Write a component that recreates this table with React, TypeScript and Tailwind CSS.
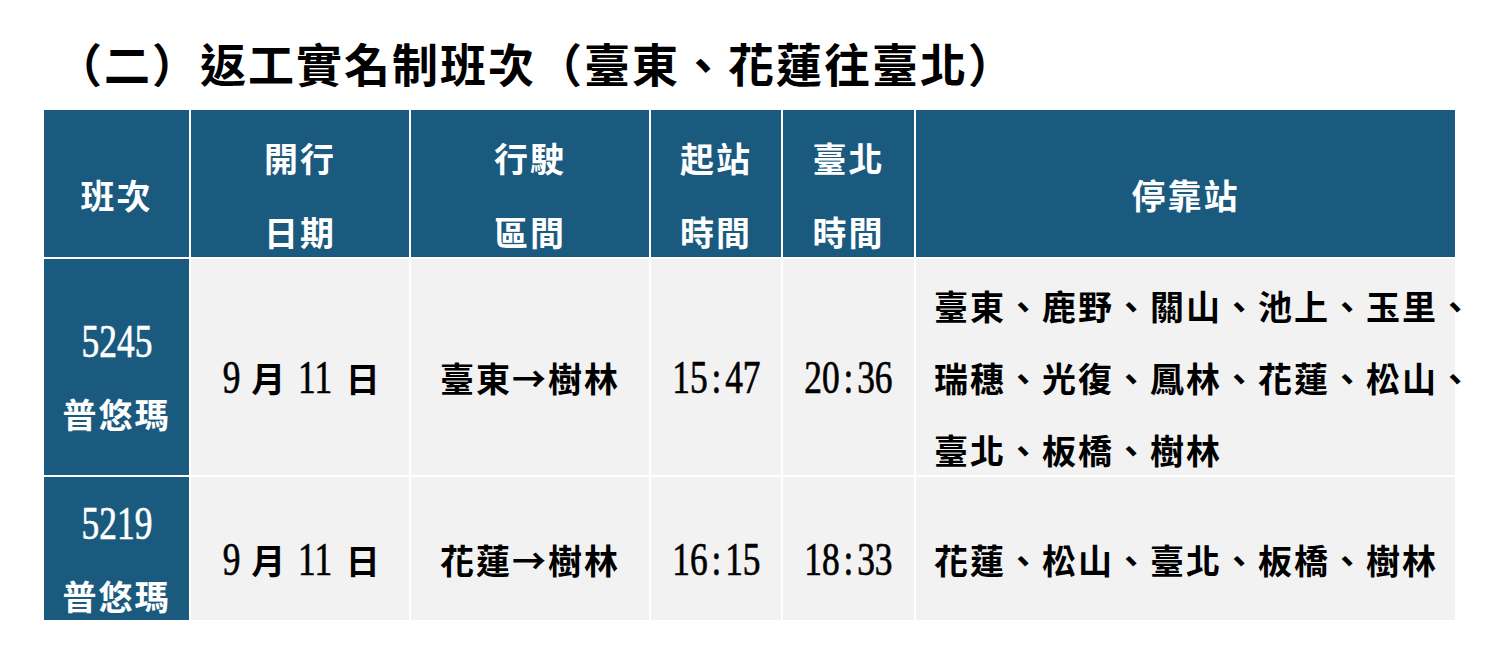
import type { ReactNode } from 'react';

const cjk = "font-['Noto_Sans_CJK_TC','Noto_Sans_CJK_JP',sans-serif]";
const num = "font-['Liberation_Serif','Noto_Sans_CJK_TC',serif]";

function Cell({ blue, left, children }: { blue?: boolean; left?: boolean; children: ReactNode }) {
  return (
    <div
      className={`flex flex-col justify-center pt-[22px] ${left ? 'items-start pl-[18px]' : 'items-center'} ${
        blue ? 'bg-[#1b5a7f] text-white' : 'bg-[#f2f2f2] text-black'
      }`}
    >
      {children}
    </div>
  );
}

function Head({ lines }: { lines: string[] }) {
  return (
    <Cell blue>
      {lines.map((l) => (
        <div key={l} className={`${cjk} text-[34px] font-semibold tracking-[2px] leading-[74px] whitespace-nowrap`}>
          {l}
        </div>
      ))}
    </Cell>
  );
}

// digits in the source are a narrow serif, so squeeze Liberation Serif a bit
function Num({ value }: { value: string }) {
  const parts = value.split(':');
  return (
    <span
      className={`${num} inline-block text-[46px] font-normal leading-[72px] scale-x-[0.77] [-webkit-text-stroke:0.7px] whitespace-nowrap`}
    >
      {parts.map((p, i) => (
        <span key={i}>
          {i > 0 && <span className="mx-[5px]">:</span>}
          {p}
        </span>
      ))}
    </span>
  );
}

function Line({ children }: { children: ReactNode }) {
  return (
    <div className={`${cjk} text-[34px] font-semibold tracking-[2px] leading-[72px] whitespace-nowrap`}>{children}</div>
  );
}

function Date() {
  return (
    <div className={`flex items-center gap-[8px] leading-[72px] ${cjk} text-[34px] font-semibold`}>
      <Num value="9" />
      <span>月</span>
      <Num value="11" />
      <span>日</span>
    </div>
  );
}

const trains = [
  {
    no: '5245',
    route: '臺東→樹林',
    dep: '15:47',
    arr: '20:36',
    stops: ['臺東、鹿野、關山、池上、玉里、', '瑞穗、光復、鳳林、花蓮、松山、', '臺北、板橋、樹林'],
  },
  {
    no: '5219',
    route: '花蓮→樹林',
    dep: '16:15',
    arr: '18:33',
    stops: ['花蓮、松山、臺北、板橋、樹林'],
  },
];

export default function App() {
  return (
    <div className="w-[1498px] h-[670px] bg-white overflow-hidden">
      <h1 className={`${cjk} h-[110px] pl-[56px] pt-[38px] text-[46px] leading-[48px] font-bold tracking-[2px] text-black whitespace-nowrap`}>
        （二）返工實名制班次（臺東、花蓮往臺北）
      </h1>

      <div className="ml-[44px] w-[1411px] grid grid-cols-[145px_218px_238px_130px_131px_539px] grid-rows-[147px_216px_143px] gap-[2px] bg-white">
        <Head lines={['班次']} />
        <Head lines={['開行', '日期']} />
        <Head lines={['行駛', '區間']} />
        <Head lines={['起站', '時間']} />
        <Head lines={['臺北', '時間']} />
        <Head lines={['停靠站']} />

        {trains.map((t) => (
          <div key={t.no} className="contents">
            <Cell blue>
              <Num value={t.no} />
              <Line>普悠瑪</Line>
            </Cell>
            <Cell>
              <Date />
            </Cell>
            <Cell>
              <Line>{t.route}</Line>
            </Cell>
            <Cell>
              <Num value={t.dep} />
            </Cell>
            <Cell>
              <Num value={t.arr} />
            </Cell>
            <Cell left>
              {t.stops.map((s) => (
                <Line key={s}>{s}</Line>
              ))}
            </Cell>
          </div>
        ))}
      </div>
    </div>
  );
}
